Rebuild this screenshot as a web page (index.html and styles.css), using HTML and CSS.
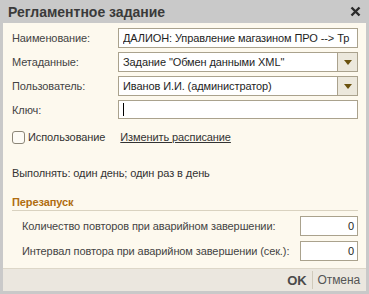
FILE: index.html
```html
<!DOCTYPE html>
<html lang="ru">
<head>
    <meta charset="UTF-8">
    <title>Регламентное задание</title>
    <link rel="stylesheet" href="styles.css">
</head>
<body>
    <div class="window">
        <div class="titlebar">
            <span class="title">Регламентное задание</span>
            <span class="close">
                <svg width="11" height="11" viewBox="0 0 11 11"><path d="M1.5 1.5 L9.5 9.5 M9.5 1.5 L1.5 9.5" stroke="#2b2b2b" stroke-width="2.4"/></svg>
            </span>
        </div>
        <div class="content">
            <div class="fields">
                <label>Наименование:</label>
                <div class="input"><span>ДАЛИОН: Управление магазином ПРО --&gt; Тр</span></div>

                <label>Метаданные:</label>
                <div class="input select"><span>Задание "Обмен данными XML"</span><i class="drop"></i></div>

                <label>Пользователь:</label>
                <div class="input select"><span>Иванов И.И. (администратор)</span><i class="drop"></i></div>

                <label>Ключ:</label>
                <div class="input key"><span class="caret"></span></div>
            </div>

            <div class="use-row">
                <span class="check"></span>
                <span class="check-label">Использование</span>
                <a class="link">Изменить расписание</a>
            </div>

            <div class="schedule">Выполнять: один день; один раз в день</div>

            <div class="group-title">Перезапуск</div>
            <div class="restart">
                <label>Количество повторов при аварийном завершении:</label>
                <div class="input num">0</div>
                <label>Интервал повтора при аварийном завершении (сек.):</label>
                <div class="input num">0</div>
            </div>
        </div>
        <div class="footer">
            <span class="ok">OK</span>
            <span class="sep"></span>
            <span class="cancel">Отмена</span>
        </div>
    </div>
</body>
</html>
```

FILE: styles.css
```css
html, body {
    margin: 0;
    padding: 0;
}
body {
    font-family: 'Liberation Sans', Arial, sans-serif;
    font-size: 11px;
    letter-spacing: -0.1px;
    color: #333;
    background: #fff;
}
.window {
    width: 369px;
    height: 294px;
    box-sizing: border-box;
    background: #c9c9c9;
    padding: 0 3px 3px 3px;
    display: flex;
    flex-direction: column;
}
.titlebar {
    height: 23px;
    flex: none;
    display: flex;
    align-items: center;
    justify-content: space-between;
    padding: 0 5px 0 5px;
}
.title {
    font-weight: bold;
    font-size: 14px;
    letter-spacing: 0;
    color: #3a3a3a;
}
.close {
    display: flex;
}
.content {
    flex: 1;
    background: #fdf9ee;
    padding: 5px 8px 0 9px;
}
.fields {
    display: grid;
    grid-template-columns: 106px 1fr;
    row-gap: 4px;
    align-items: center;
}
.fields label, .restart label {
    color: #444;
    white-space: nowrap;
}
.input {
    height: 20px;
    box-sizing: border-box;
    border: 1px solid #aaa28d;
    background: #fff;
    display: flex;
    align-items: center;
    padding: 0 3px 0 4px;
    color: #1e1e1e;
    white-space: nowrap;
    overflow: hidden;
    font-size: 11px;
    letter-spacing: -0.1px;
}
.input span {
    flex: 1;
    overflow: hidden;
}
.select {
    padding-right: 0;
}
.drop {
    width: 19px;
    height: 18px;
    border-left: 1px solid #aaa28d;
    background: #ece8dc;
    display: flex;
    align-items: center;
    justify-content: center;
}
.drop::after {
    content: "";
    border-left: 4px solid transparent;
    border-right: 4px solid transparent;
    border-top: 5px solid #6b520f;
}
.key {
    height: 19px;
}
.caret {
    flex: none !important;
    width: 1px;
    height: 13px;
    background: #000;
}
.use-row {
    display: flex;
    align-items: center;
    margin-top: 10px;
    height: 16px;
}
.check {
    width: 11px;
    height: 11px;
    border: 1px solid #8c8677;
    border-radius: 3px;
    background: #fdfbf5;
    margin-right: 3px;
}
.check-label {
    margin-right: 15px;
}
.link {
    color: #333;
    text-decoration: underline;
}
.schedule {
    margin-top: 22px;
}
.group-title {
    margin-top: 17px;
    font-weight: bold;
    color: #b06d10;
    padding-bottom: 2px;
    border-bottom: 1px solid #d9d2c0;
}
.restart {
    display: grid;
    grid-template-columns: 1fr 58px;
    row-gap: 5px;
    align-items: center;
    padding-left: 10px;
    margin-top: 5px;
}
.num {
    justify-content: flex-end;
}
.footer {
    height: 23px;
    flex: none;
    box-sizing: border-box;
    background: #ebe7df;
    border-top: 1px solid #ddd7c8;
    display: flex;
    align-items: center;
    justify-content: flex-end;
    padding-right: 6px;
}
.ok {
    font-weight: bold;
    font-size: 13px;
    color: #4a4a4a;
}
.sep {
    width: 1px;
    height: 18px;
    background: #d0cabb;
    margin: 0 5px;
}
.cancel {
    color: #555;
    font-size: 12px;
}
```
